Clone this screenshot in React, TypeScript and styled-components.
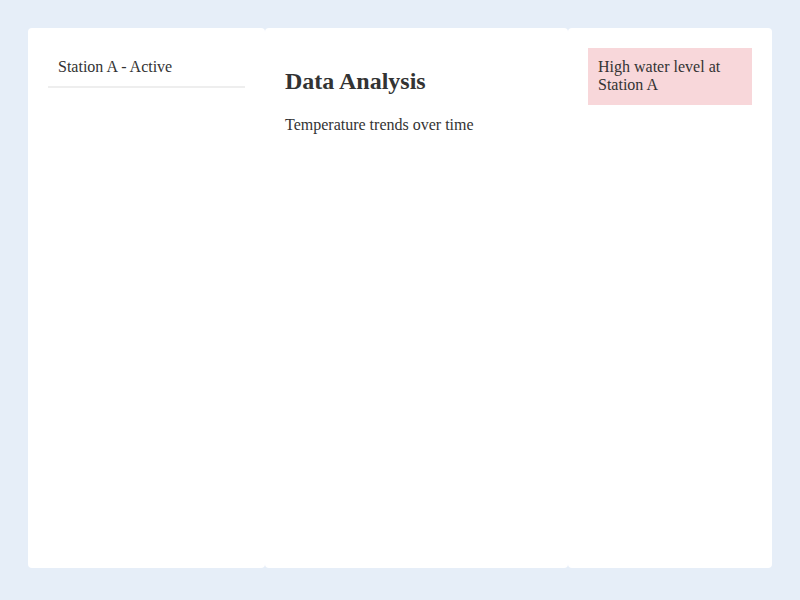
import React from "react";
import styled, {createGlobalStyle} from "styled-components";

const GlobalStyle = createGlobalStyle`
  body {
    margin: 0;
    background-color: #e6eef8;
    font-family: "Liberation Serif", "Times New Roman", serif;
    line-height: 1.15;
    color: #333;
  }
`;

const Layout = styled.div`
  display: grid;
  grid-template-columns: 237px 303px 1fr;
  height: 540px;
  padding: 28px;
`;

const Panel = styled.div`
  background-color: #fff;
  border-radius: 4px;
  padding: 20px;
`;

const StationItem = styled.div`
  padding: 10px;
  border-bottom: 2px solid #eee;
  font-size: 16px;
`;

const Title = styled.h2`
  font-size: 24px;
  margin: 20px 0;
`;

const Text = styled.p`
  font-size: 16px;
  margin: 0;
`;

const Alert = styled.div`
  background-color: #f8d7da;
  padding: 10px;
  font-size: 16px;
`;

export default function App() {
    return (
        <>
            <GlobalStyle/>
            <Layout>
                <Panel>
                    <StationItem>Station A - Active</StationItem>
                </Panel>
                <Panel>
                    <Title>Data Analysis</Title>
                    <Text>Temperature trends over time</Text>
                </Panel>
                <Panel>
                    <Alert>High water level at Station A</Alert>
                </Panel>
            </Layout>
        </>
    );
}
